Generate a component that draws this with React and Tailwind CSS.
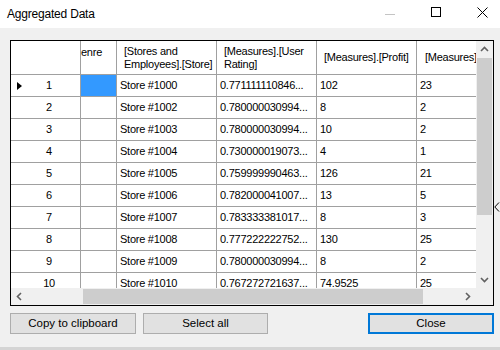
import React from 'react'

const rows = [
    ['1', 'Store #1000', '0.771111110846...', '102', '23'],
    ['2', 'Store #1002', '0.780000030994...', '8', '2'],
    ['3', 'Store #1003', '0.780000030994...', '10', '2'],
    ['4', 'Store #1004', '0.730000019073...', '4', '1'],
    ['5', 'Store #1005', '0.759999990463...', '126', '21'],
    ['6', 'Store #1006', '0.782000041007...', '13', '5'],
    ['7', 'Store #1007', '0.783333381017...', '8', '3'],
    ['8', 'Store #1008', '0.777222222752...', '130', '25'],
    ['9', 'Store #1009', '0.780000030994...', '8', '2'],
    ['10', 'Store #1010', '0.767272721637...', '74.9525', '25'],
]

const Chevron = ({ dir }) => {
    const d = {
        up: 'M1 6 L4.5 2.5 L8 6',
        down: 'M1 3 L4.5 6.5 L8 3',
        left: 'M6 1 L2.5 4.5 L6 8',
        right: 'M3 1 L6.5 4.5 L3 8',
    }[dir]
    return (
        <svg width="9" height="9" viewBox="0 0 9 9">
            <path d={d} fill="none" stroke="#606060" strokeWidth="1.6" />
        </svg>
    )
}

const App = () => {
    return (
        <div className="w-[500px] h-[350px] overflow-hidden flex flex-col bg-[#f0f0f0] text-black" style={{ fontFamily: '"Liberation Sans", Arial, sans-serif' }}>
            {/* title bar */}
            <div className="h-[28px] shrink-0 bg-white flex items-center">
                <span className="pl-[7px] text-[12px] tracking-[-0.2px] flex-1">Aggregated Data</span>
                <div className="w-[10px] h-px bg-[#c4c4c4] mr-[36px]"></div>
                <div className="w-[10px] h-[10px] border border-black mr-[36px] mb-[4px]"></div>
                <svg className="mr-[12px] mb-[3px]" width="11" height="11" viewBox="0 0 11 11">
                    <path d="M0.5 0.5 L10.5 10.5 M10.5 0.5 L0.5 10.5" stroke="#000" strokeWidth="1" />
                </svg>
            </div>

            <div className="flex-1 flex flex-col pl-[10px] pt-[12px] relative">
                {/* grid */}
                <div className="w-[484px] h-[266px] border border-black bg-white flex flex-col text-[11px] leading-[13px] tracking-[-0.25px]">
                    <div className="flex h-[247px]">
                        <div className="w-[465px] overflow-hidden">
                            <div className="flex w-[606px] h-[34px] border-b border-[#a0a0a0] whitespace-nowrap">
                                <div className="w-[70px] shrink-0 border-r border-[#a0a0a0]"></div>
                                <div className="w-[36px] shrink-0 border-r border-[#a0a0a0] pt-[5px]">enre</div>
                                <div className="w-[100px] shrink-0 border-r border-[#a0a0a0] pl-[7px] flex items-center">[Stores and<br />Employees].[Store]</div>
                                <div className="w-[100px] shrink-0 border-r border-[#a0a0a0] pl-[7px] flex items-center">[Measures].[User<br />Rating]</div>
                                <div className="w-[100px] shrink-0 border-r border-[#a0a0a0] pl-[7px] flex items-center">[Measures].[Profit]</div>
                                <div className="w-[200px] shrink-0 pl-[8px] flex items-center">[Measures]</div>
                            </div>
                            {rows.map((r, i) => (
                                <div key={r[0]} className="flex w-[606px] h-[22px] border-b border-[#a0a0a0] whitespace-nowrap">
                                    <div className="w-[70px] shrink-0 border-r border-[#a0a0a0] relative flex items-center justify-center pl-[7px]">
                                        {i === 0 && (
                                            <svg className="absolute left-[6px] top-[7px]" width="5" height="8" viewBox="0 0 5 8">
                                                <path d="M0 0 L5 4 L0 8 Z" fill="#000" />
                                            </svg>
                                        )}
                                        {r[0]}
                                    </div>
                                    <div className={i === 0 ? 'w-[36px] shrink-0 border-r border-[#a0a0a0] bg-[#3399ff]' : 'w-[36px] shrink-0 border-r border-[#a0a0a0]'}></div>
                                    <div className="w-[100px] shrink-0 border-r border-[#a0a0a0] pl-[3px] flex items-center">{r[1]}</div>
                                    <div className="w-[100px] shrink-0 border-r border-[#a0a0a0] pl-[3px] flex items-center overflow-hidden">{r[2]}</div>
                                    <div className="w-[100px] shrink-0 border-r border-[#a0a0a0] pl-[3px] flex items-center">{r[3]}</div>
                                    <div className="w-[100px] shrink-0 border-r border-[#a0a0a0] pl-[3px] flex items-center">{r[4]}</div>
                                </div>
                            ))}
                        </div>
                        {/* vertical scrollbar */}
                        <div className="w-[17px] bg-[#f0f0f0] flex flex-col">
                            <div className="h-[17px] flex items-center justify-center"><Chevron dir="up" /></div>
                            <div className="h-[157px] mx-px bg-[#cdcdcd]"></div>
                            <div className="flex-1"></div>
                            <div className="h-[17px] flex items-center justify-center"><Chevron dir="down" /></div>
                        </div>
                    </div>
                    {/* horizontal scrollbar */}
                    <div className="flex h-[17px] bg-[#f0f0f0]">
                        <div className="w-[17px] flex items-center justify-center"><Chevron dir="left" /></div>
                        <div className="w-[55px]"></div>
                        <div className="w-[340px] my-px bg-[#cdcdcd]"></div>
                        <div className="flex-1"></div>
                        <div className="w-[17px] flex items-center justify-center"><Chevron dir="right" /></div>
                        <div className="w-[17px]"></div>
                    </div>
                </div>

                {/* buttons */}
                <div className="flex mt-[7px] w-[484px] text-[11.5px]">
                    <button className="w-[126px] h-[21px] bg-[#e1e1e1] border border-[#adadad] flex items-center justify-center">Copy to clipboard</button>
                    <button className="w-[125px] h-[21px] ml-[7px] bg-[#e1e1e1] border border-[#adadad] flex items-center justify-center">Select all</button>
                    <div className="flex-1"></div>
                    <button className="w-[126px] h-[21px] bg-[#e1e1e1] border-2 border-[#0078d7] flex items-center justify-center">Close</button>
                </div>

                <svg className="absolute left-[494px] top-[174px]" width="6" height="10" viewBox="0 0 6 10">
                    <path d="M5 0.5 L0.8 5 L5 9.5" fill="none" stroke="#000" strokeWidth="1" />
                </svg>
                <div className="flex-1"></div>
                <div className="h-[3px] -ml-[10px] bg-[#d4d4d4]"></div>
            </div>
        </div>
    )
}

export default App
